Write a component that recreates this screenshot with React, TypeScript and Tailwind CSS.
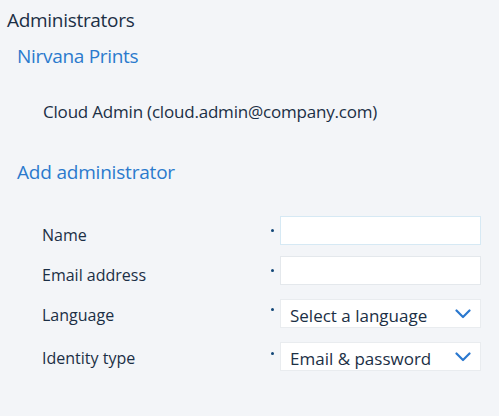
import React from "react";

const Chevron = () => (
  <svg width="16" height="10" viewBox="0 0 16 10" fill="none">
    <path d="M1.5 1.5 L8 8 L14.5 1.5" stroke="#2a78cf" strokeWidth="2.2" strokeLinecap="round" strokeLinejoin="round" />
  </svg>
);

const Dot = ({ top }: { top: string }) => (
  <div className={`w-[9px] flex justify-start ${top}`}>
    <div className="w-[3px] h-[3px] rounded-full bg-[#114677]" />
  </div>
);

export default function App() {
  return (
    <div
      className="w-[499px] h-[416px] bg-[#f3f5f8] text-[#1b2f45] overflow-hidden"
      style={{ fontFamily: '"Open Sans", "Noto Sans", sans-serif' }}
    >
      <div className="pl-[7px] pt-[8px] text-[19px] leading-[24px] tracking-[-0.3px]">Administrators</div>
      <div className="pl-[17px] pt-[12px] text-[19px] leading-[24px] text-[#2b7acd] tracking-[-0.3px]">Nirvana Prints</div>
      <div className="pl-[43px] pt-[32px] text-[17px] leading-[24px] tracking-[-0.2px]">Cloud Admin (cloud.admin@company.com)</div>
      <div className="pl-[17px] pt-[36px] text-[19px] leading-[24px] text-[#2b7acd] tracking-[-0.2px]">Add administrator</div>

      <div className="flex flex-col pt-[32px] pl-[42px] text-[16px]">
        <div className="flex h-[29px]">
          <div className="w-[229px] pt-[7px] leading-[24px]">Name</div>
          <Dot top="pt-[13px]" />
          <div className="w-[201px] h-[29px] bg-white border border-[#d6e9f4]" />
        </div>
        <div className="flex h-[29px] mt-[11px]">
          <div className="w-[229px] pt-[7px] leading-[24px]">Email address</div>
          <Dot top="pt-[13px]" />
          <div className="w-[201px] h-[29px] bg-white border border-[#e4e8ec]" />
        </div>
        <div className="flex h-[29px] mt-[14px]">
          <div className="w-[229px] pt-[4px] leading-[24px]">Language</div>
          <Dot top="pt-[9px]" />
          <div className="w-[201px] h-[29px] bg-white border border-[#e9ecef] flex items-start justify-between pl-[9px] pr-[9px]">
            <span className="text-[17px] leading-[24px] mt-[4px]">Select a language</span>
            <div className="self-center"><Chevron /></div>
          </div>
        </div>
        <div className="flex h-[29px] mt-[14px]">
          <div className="w-[229px] pt-[4px] leading-[24px]">Identity type</div>
          <Dot top="pt-[10px]" />
          <div className="w-[201px] h-[29px] bg-white border border-[#e9ecef] flex items-start justify-between pl-[9px] pr-[9px]">
            <span className="text-[17px] leading-[24px] mt-[4px]">Email &amp; password</span>
            <div className="self-center"><Chevron /></div>
          </div>
        </div>
      </div>
    </div>
  );
}
